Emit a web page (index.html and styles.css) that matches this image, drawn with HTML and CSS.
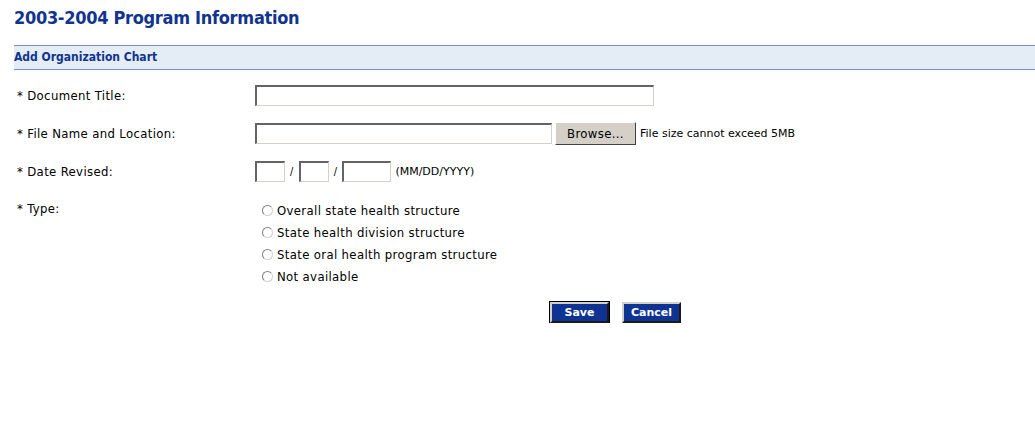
FILE: index.html
```html
<!DOCTYPE html>
<html lang="en">
<head>
    <meta charset="UTF-8">
    <title>2003-2004 Program Information</title>
    <link rel="stylesheet" href="styles.css">
</head>
<body>
    <div class="page">
        <h1 class="page-title">2003-2004 Program Information</h1>
        <div class="section-bar">Add Organization Chart</div>

        <form class="chart-form">
            <label class="field-label" for="docTitle">* Document Title:</label>
            <div class="field">
                <input type="text" id="docTitle" class="text-input wide">
            </div>

            <label class="field-label" for="fileName">* File Name and Location:</label>
            <div class="field">
                <input type="text" id="fileName" class="text-input file">
                <button type="button" class="browse-btn">Browse...</button>
                <span class="hint">File size cannot exceed 5MB</span>
            </div>

            <label class="field-label" for="month">* Date Revised:</label>
            <div class="field">
                <input type="text" id="month" class="text-input short">
                <span class="slash">/</span>
                <input type="text" class="text-input short">
                <span class="slash">/</span>
                <input type="text" class="text-input year">
                <span class="hint">(MM/DD/YYYY)</span>
            </div>

            <div class="field-label type-label">* Type:</div>
            <div class="radio-list">
                <label class="radio-row"><input type="radio" name="type" value="overall"> Overall state health structure</label>
                <label class="radio-row"><input type="radio" name="type" value="division"> State health division structure</label>
                <label class="radio-row"><input type="radio" name="type" value="oral"> State oral health program structure</label>
                <label class="radio-row"><input type="radio" name="type" value="na"> Not available</label>
            </div>

            <div></div>
            <div class="actions">
                <button type="submit" class="action-btn default">Save</button>
                <button type="button" class="action-btn">Cancel</button>
            </div>
        </form>
    </div>
</body>
</html>
```

FILE: styles.css
```css
body {
    margin: 0;
    padding: 0;
    background: white;
    color: black;
    font-family: "DejaVu Sans Condensed", "DejaVu Sans", Verdana, sans-serif;
}
.page {
    padding-left: 14px;
}
.page-title {
    margin: 0;
    padding-top: 7px;
    font-size: 18px;
    line-height: 22px;
    font-weight: bold;
    letter-spacing: -0.3px;
    color: #10348f;
}
.section-bar {
    margin-top: 16px;
    height: 23px;
    line-height: 23px;
    background: #e4ecf6;
    border-top: 1px solid #7b8fc5;
    border-bottom: 1px solid #7b8fc5;
    font-size: 12px;
    font-weight: bold;
    color: #10348f;
}
.chart-form {
    display: grid;
    grid-template-columns: 241px 1fr;
    row-gap: 16px;
    margin-top: 15px;
    font-size: 13px;
    letter-spacing: 0.35px;
}
.field-label {
    padding-left: 3px;
    align-self: center;
}
.type-label {
    align-self: start;
    padding-top: 3px;
}
.field {
    display: flex;
    align-items: center;
}
.text-input {
    box-sizing: border-box;
    height: 21px;
    margin: 0;
    padding: 1px 2px;
    background: white;
    border-top: 2px solid #646464;
    border-left: 2px solid #646464;
    border-right: 1px solid #d4d0c8;
    border-bottom: 1px solid #d4d0c8;
    font-family: inherit;
    font-size: 13px;
}
.text-input.wide { width: 399px; }
.text-input.file { width: 297px; }
.text-input.short { width: 30px; }
.text-input.year { width: 49px; }
.slash {
    margin: 0 5px 0 5px;
    font-size: 11px;
}
.browse-btn {
    height: 23px;
    width: 81px;
    margin: 0 0 0 3px;
    padding: 0;
    background: #d4d0c8;
    border: 1px solid;
    border-color: #ffffff #404040 #404040 #ffffff;
    font-family: inherit;
    font-size: 13px;
    letter-spacing: 0.35px;
    color: black;
}
.hint {
    margin-left: 4px;
    font-size: 11px;
    letter-spacing: 0;
    font-family: "DejaVu Sans", Verdana, sans-serif;
}
.radio-list {
    display: flex;
    flex-direction: column;
    margin-top: 1px;
}
.radio-row {
    display: flex;
    align-items: center;
    height: 22px;
    padding-left: 7px;
}
.radio-row input {
    appearance: none;
    width: 11px;
    height: 11px;
    margin: 0 4px 0 0;
    border-radius: 50%;
    border: 1px solid;
    border-color: #7f7f7f #d4d0c8 #d4d0c8 #7f7f7f;
    background: white;
}
.actions {
    display: flex;
    gap: 13px;
    padding-left: 295px;
    margin-top: -1px;
}
.action-btn {
    width: 59px;
    height: 21px;
    padding: 0;
    background: #0f3392;
    color: white;
    font-family: "DejaVu Sans", Verdana, sans-serif;
    font-size: 11px;
    font-weight: bold;
    letter-spacing: 0;
    border: 2px solid;
    border-color: #d4d0c8 #1a1a1a #1a1a1a #d4d0c8;
}
.action-btn.default {
    outline: 1px solid black;
}
```
